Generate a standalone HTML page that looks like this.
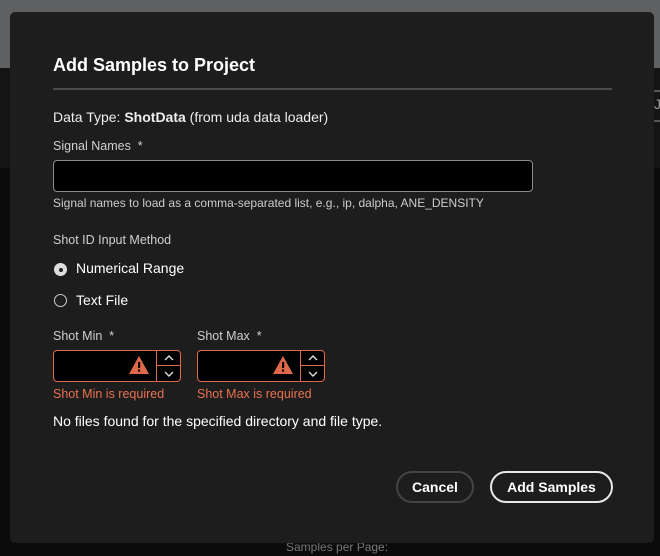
<!DOCTYPE html>
<html><head><style>
*{box-sizing:border-box;margin:0;padding:0}
body{width:660px;height:556px;overflow:hidden;background:#0b0b0b;font-family:"Liberation Sans",sans-serif;position:relative}
.bgtop{position:absolute;left:0;top:0;width:660px;height:68px;background:#5f6061}
.bgmid{position:absolute;left:0;top:68px;width:660px;height:100px;background:#141414}
.rl{position:absolute;left:654px;width:6px;height:2px;background:#555}
.modal{position:absolute;left:10px;top:12px;width:644px;height:531px;background:#1d1d1d;border-radius:5px}
.t{position:absolute;color:#fff;white-space:nowrap}
h1{position:absolute;left:43px;top:43px;font-size:18px;font-weight:bold;color:#fff}
.hr{position:absolute;left:43px;top:76px;width:559px;height:2px;background:#4a4a4a}
.lbl{color:#cfcfcf;font-size:12.5px}
.inp{position:absolute;background:#000;border:1px solid #8a8a8a;border-radius:4px}
.num{position:absolute;width:128px;height:32px;background:#000;border:1px solid #e0694b;border-radius:4px}
.spin{position:absolute;right:0;top:0;width:24px;height:30px;border-left:1px solid #e0694b}
.spin div{height:15px;display:flex;align-items:center;justify-content:center}
.spin div:first-child{border-bottom:1px solid #e0694b}
.err{color:#e9714f;font-size:12.5px}
.btn{position:absolute;height:32px;border-radius:16px;color:#fff;font-weight:bold;font-size:14px;text-align:center;line-height:28px}
</style></head><body>
<div class="bgtop"></div><div class="bgmid"></div>
<div class="rl" style="top:90px"></div><div class="rl" style="top:120px"></div>
<div class="t" style="left:654px;top:96px;color:#999;font-size:14px">J</div>
<div class="t" style="left:286px;top:540px;color:#777;font-size:12px">Samples per Page:</div>
<div class="modal">
<h1>Add Samples to Project</h1>
<div class="hr"></div>
<div class="t" style="left:43px;top:97px;font-size:14px;color:#eee">Data Type: <b>ShotData</b> (from uda data loader)</div>
<div class="t lbl" style="left:43px;top:127px">Signal Names &nbsp;*</div>
<div class="inp" style="left:43px;top:148px;width:480px;height:32px"></div>
<div class="t" style="left:43px;top:184px;font-size:12px;color:#ccc">Signal names to load as a comma-separated list, e.g., ip, dalpha, ANE_DENSITY</div>
<div class="t lbl" style="left:43px;top:221px">Shot ID Input Method</div>
<div style="position:absolute;left:44px;top:251px;width:13px;height:13px;border-radius:50%;background:#ddd"><div style="position:absolute;left:4.5px;top:4.5px;width:4px;height:4px;border-radius:50%;background:#222"></div></div>
<div class="t" style="left:66px;top:248px;font-size:14px;color:#fff">Numerical Range</div>
<div style="position:absolute;left:44px;top:282px;width:13px;height:13px;border-radius:50%;border:1.5px solid #ccc"></div>
<div class="t" style="left:66px;top:280px;font-size:14px;color:#fff">Text File</div>
<div class="t lbl" style="left:43px;top:317px">Shot Min &nbsp;*</div>
<div class="t lbl" style="left:187px;top:317px">Shot Max &nbsp;*</div>
<div class="num" style="left:43px;top:338px"><svg style="position:absolute;left:75px;top:5px" width="20" height="18" viewBox="0 0 20 18"><path d="M10 0L20 18H0Z" fill="#e0694b"/><rect x="9" y="6" width="2.2" height="6" fill="#000"/><rect x="9" y="13.5" width="2.2" height="2.2" fill="#000"/></svg><div class="spin"><div><svg width="10" height="6"><path d="M1 5L5 1L9 5" stroke="#ddd" stroke-width="1.4" fill="none"/></svg></div><div><svg width="10" height="6"><path d="M1 1L5 5L9 1" stroke="#ddd" stroke-width="1.4" fill="none"/></svg></div></div></div>
<div class="num" style="left:187px;top:338px"><svg style="position:absolute;left:75px;top:5px" width="20" height="18" viewBox="0 0 20 18"><path d="M10 0L20 18H0Z" fill="#e0694b"/><rect x="9" y="6" width="2.2" height="6" fill="#000"/><rect x="9" y="13.5" width="2.2" height="2.2" fill="#000"/></svg><div class="spin"><div><svg width="10" height="6"><path d="M1 5L5 1L9 5" stroke="#ddd" stroke-width="1.4" fill="none"/></svg></div><div><svg width="10" height="6"><path d="M1 1L5 5L9 1" stroke="#ddd" stroke-width="1.4" fill="none"/></svg></div></div></div>
<div class="t err" style="left:43px;top:375px">Shot Min is required</div>
<div class="t err" style="left:187px;top:375px">Shot Max is required</div>
<div class="t" style="left:43px;top:401px;font-size:14px;color:#fff">No files found for the specified directory and file type.</div>
<div class="btn" style="left:386px;top:459px;width:78px;border:2px solid #444">Cancel</div>
<div class="btn" style="left:480px;top:459px;width:123px;border:2px solid #e8e8e8">Add Samples</div>
</div>
</body></html>
